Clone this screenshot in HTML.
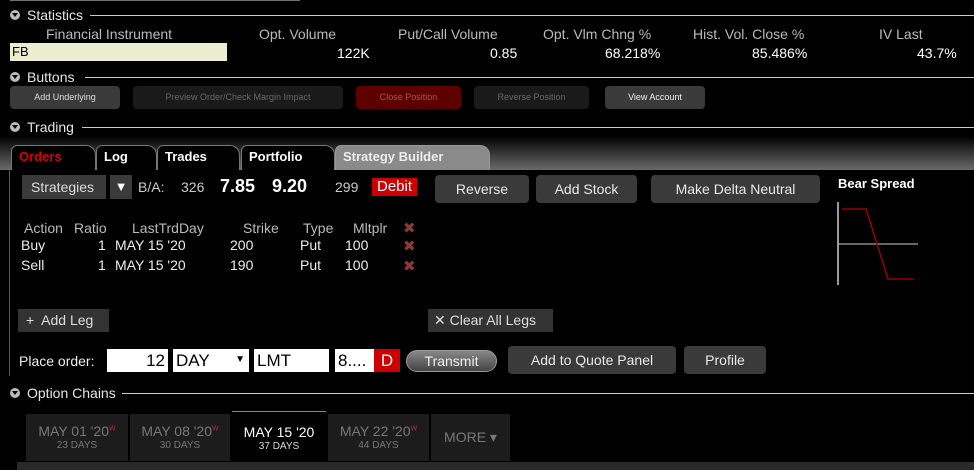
<!DOCTYPE html>
<html><head><style>
*{margin:0;padding:0;box-sizing:border-box}
body{width:974px;height:470px;background:#000;font-family:"Liberation Sans","DejaVu Sans",sans-serif;color:#ddd;position:relative;overflow:hidden;font-size:14px}
.a{position:absolute;white-space:nowrap}
.sec{position:absolute;left:10px;right:0;height:16px;font-size:14px;color:#e6e6e6}
.sec .tri{position:absolute;left:0;top:3px;width:10px;height:10px;border-radius:50%;background:#bbb}
.sec .tri:after{content:"";position:absolute;left:2px;top:3px;border-left:3px solid transparent;border-right:3px solid transparent;border-top:4px solid #000}
.sec .line{position:absolute;top:8px;right:0;height:1px;background:#ccc}
.btn{position:absolute;border-radius:4px;text-align:center;font-size:9px;line-height:23px}
.b2{position:absolute;background:#3a3a3a;border-radius:4px;text-align:center;font-size:14px;color:#e8e8e8;line-height:28px}
.tab{position:absolute;top:145px;height:25px;border:1px solid #777;border-bottom:none;border-radius:6px 10px 0 0;font-weight:bold;font-size:13px;padding:3px 0 0 7px;color:#fff;background:#000}
.inp{position:absolute;background:#fff;color:#000;font-size:17px;top:349px;height:23px;line-height:23px;padding:0 3px}
.dt{position:absolute;top:414px;height:47px;background:#1c1c1c;text-align:center;color:#777;font-size:14px;padding-top:9px}
.dt small{display:block;font-size:10px;margin-top:1px}
.dt sup{color:#a33;font-size:7px}
.x{position:absolute;color:#8a3a3a;font-size:15px;font-weight:bold}
</style></head><body>
<div class="a" style="left:10px;top:0;width:290px;height:1px;background:#ddd;opacity:.5"></div>
<div class="sec" style="top:7px"><div class="tri"></div><span class="a" style="left:17px;top:0">Statistics</span><div class="line" style="left:80px"></div></div>
<div class="a" style="left:46px;top:26px;color:#bbb">Financial Instrument</div>
<div class="a" style="left:259px;top:26px;color:#bbb">Opt. Volume</div>
<div class="a" style="left:398px;top:26px;color:#bbb">Put/Call Volume</div>
<div class="a" style="left:543px;top:26px;color:#bbb">Opt. Vlm Chng %</div>
<div class="a" style="left:693px;top:26px;color:#bbb">Hist. Vol. Close %</div>
<div class="a" style="left:879px;top:26px;color:#bbb">IV Last</div>
<div class="a" style="left:10px;top:43px;width:217px;height:18px;background:#ececcf;color:#000;font-size:13px;padding:1px 2px">FB</div>
<div class="a" style="left:337px;top:45px;color:#fff">122K</div>
<div class="a" style="left:490px;top:45px;color:#fff">0.85</div>
<div class="a" style="left:605px;top:45px;color:#fff">68.218%</div>
<div class="a" style="left:752px;top:45px;color:#fff">85.486%</div>
<div class="a" style="left:917px;top:45px;color:#fff">43.7%</div>
<div class="sec" style="top:69px"><div class="tri"></div><span class="a" style="left:17px;top:0">Buttons</span><div class="line" style="left:75px"></div></div>
<div class="btn" style="left:10px;top:86px;width:110px;background:#3a3a3a;color:#ddd">Add Underlying</div>
<div class="btn" style="left:133px;top:86px;width:210px;background:#1a1a1a;color:#666">Preview Order/Check Margin Impact</div>
<div class="btn" style="left:356px;top:86px;width:105px;background:#5e0000;color:#a55">Close Position</div>
<div class="btn" style="left:474px;top:86px;width:115px;background:#1a1a1a;color:#666">Reverse Position</div>
<div class="btn" style="left:605px;top:86px;width:100px;background:#3a3a3a;color:#eee">View Account</div>
<div class="sec" style="top:119px"><div class="tri"></div><span class="a" style="left:17px;top:0">Trading</span><div class="line" style="left:72px"></div></div>
<div class="a" style="left:0;top:136px;width:974px;height:34px;background:linear-gradient(#000,#6a6a6a)"></div>
<div class="tab" style="left:11px;width:85px;color:#d00">Orders</div>
<div class="tab" style="left:96px;width:61px">Log</div>
<div class="tab" style="left:157px;width:83px">Trades</div>
<div class="tab" style="left:241px;width:94px">Portfolio</div>
<div class="tab" style="left:335px;width:155px;background:#8a8a8a;color:#eee;border-color:#999">Strategy Builder</div>
<div class="a" style="left:9px;top:170px;width:1px;height:206px;background:#555"></div>
<div class="a" style="left:22px;top:175px;width:84px;height:24px;background:#3a3a3a;color:#ddd;font-size:14px;line-height:24px;padding-left:9px">Strategies</div>
<div class="a" style="left:110px;top:175px;width:22px;height:24px;background:#3a3a3a;color:#fff;font-size:13px;line-height:24px;text-align:center">▼</div>
<div class="a" style="left:138px;top:179px;font-size:14px;color:#ccc">B/A:</div>
<div class="a" style="left:181px;top:179px;font-size:14px;color:#ccc">326</div>
<div class="a" style="left:220px;top:176px;font-size:18px;color:#fff;font-weight:bold">7.85</div>
<div class="a" style="left:272px;top:176px;font-size:18px;color:#fff;font-weight:bold">9.20</div>
<div class="a" style="left:335px;top:179px;font-size:14px;color:#ccc">299</div>
<div class="a" style="left:372px;top:178px;width:45px;height:18px;background:#c00;color:#fff;font-size:15px;text-align:center;line-height:18px">Debit</div>
<div class="b2" style="left:435px;top:175px;width:94px">Reverse</div>
<div class="b2" style="left:536px;top:175px;width:101px">Add Stock</div>
<div class="b2" style="left:651px;top:175px;width:169px">Make Delta Neutral</div>
<div class="a" style="left:838px;top:176px;font-weight:bold;font-size:13px;color:#fff">Bear Spread</div>
<svg class="a" style="left:836px;top:202px" width="85" height="85"><line x1="2" y1="0" x2="2" y2="83" stroke="#ccc" stroke-width="1.5"/><line x1="2" y1="42" x2="82" y2="42" stroke="#ccc"/><polyline points="6,7 30,7 52,77 77,77" fill="none" stroke="#900" stroke-width="1.5"/></svg>
<div class="a" style="left:24px;top:220px;color:#bbb">Action</div>
<div class="a" style="left:74px;top:220px;color:#bbb">Ratio</div>
<div class="a" style="left:132px;top:220px;color:#bbb">LastTrdDay</div>
<div class="a" style="left:243px;top:220px;color:#bbb">Strike</div>
<div class="a" style="left:303px;top:220px;color:#bbb">Type</div>
<div class="a" style="left:353px;top:220px;color:#bbb">Mltplr</div>
<div class="a" style="left:21px;top:237px;color:#eee">Buy</div><div class="a" style="left:98px;top:237px;color:#eee">1</div><div class="a" style="left:115px;top:237px;color:#eee">MAY 15 '20</div><div class="a" style="left:230px;top:237px;color:#eee">200</div><div class="a" style="left:300px;top:237px;color:#eee">Put</div><div class="a" style="left:345px;top:237px;color:#eee">100</div>
<div class="a" style="left:21px;top:257px;color:#eee">Sell</div><div class="a" style="left:98px;top:257px;color:#eee">1</div><div class="a" style="left:115px;top:257px;color:#eee">MAY 15 '20</div><div class="a" style="left:230px;top:257px;color:#eee">190</div><div class="a" style="left:300px;top:257px;color:#eee">Put</div><div class="a" style="left:345px;top:257px;color:#eee">100</div>
<div class="x" style="left:403px;top:219px">✖</div>
<div class="x" style="left:403px;top:237px">✖</div>
<div class="x" style="left:403px;top:257px">✖</div>
<div class="a" style="left:18px;top:309px;width:91px;height:23px;background:#333;color:#ddd;line-height:23px;padding-left:8px">+&nbsp; Add Leg</div>
<div class="a" style="left:428px;top:309px;width:125px;height:23px;background:#333;color:#ddd;line-height:23px;padding-left:6px">✕ Clear All Legs</div>
<div class="a" style="left:19px;top:353px;color:#eee">Place order:</div>
<div class="inp" style="left:107px;width:61px;text-align:right">12</div>
<div class="inp" style="left:173px;width:76px">DAY<span style="position:absolute;right:4px;top:-1px;font-size:10px">▼</span></div>
<div class="inp" style="left:254px;width:75px">LMT</div>
<div class="inp" style="left:335px;width:40px">8....</div>
<div class="inp" style="left:374px;width:26px;background:#c00;color:#fff;text-align:center">D</div>
<div class="a" style="left:406px;top:350px;width:91px;height:22px;border-radius:11px;background:linear-gradient(#888,#444);border:1px solid #999;color:#eee;text-align:center;line-height:20px;font-size:14px">Transmit</div>
<div class="b2" style="left:508px;top:346px;width:168px">Add to Quote Panel</div>
<div class="b2" style="left:684px;top:346px;width:82px">Profile</div>
<div class="sec" style="top:385px"><div class="tri"></div><span class="a" style="left:17px;top:0">Option Chains</span><div class="line" style="left:112px"></div></div>
<div class="dt" style="left:26px;width:102px">MAY 01 '20<sup>W</sup><small>23 DAYS</small></div>
<div class="dt" style="left:130px;width:100px">MAY 08 '20<sup>W</sup><small>30 DAYS</small></div>
<div class="dt" style="left:232px;top:411px;width:94px;height:51px;background:#000;border-top:1px solid #888;color:#fff;padding-top:12px">MAY 15 '20<small style="color:#ddd">37 DAYS</small></div>
<div class="dt" style="left:328px;width:101px">MAY 22 '20<sup>W</sup><small>44 DAYS</small></div>
<div class="dt" style="left:431px;width:79px;padding-top:15px">MORE ▾</div>
<div class="a" style="left:17px;top:462px;width:957px;height:8px;background:#2a2a2a"></div>
</body></html>
